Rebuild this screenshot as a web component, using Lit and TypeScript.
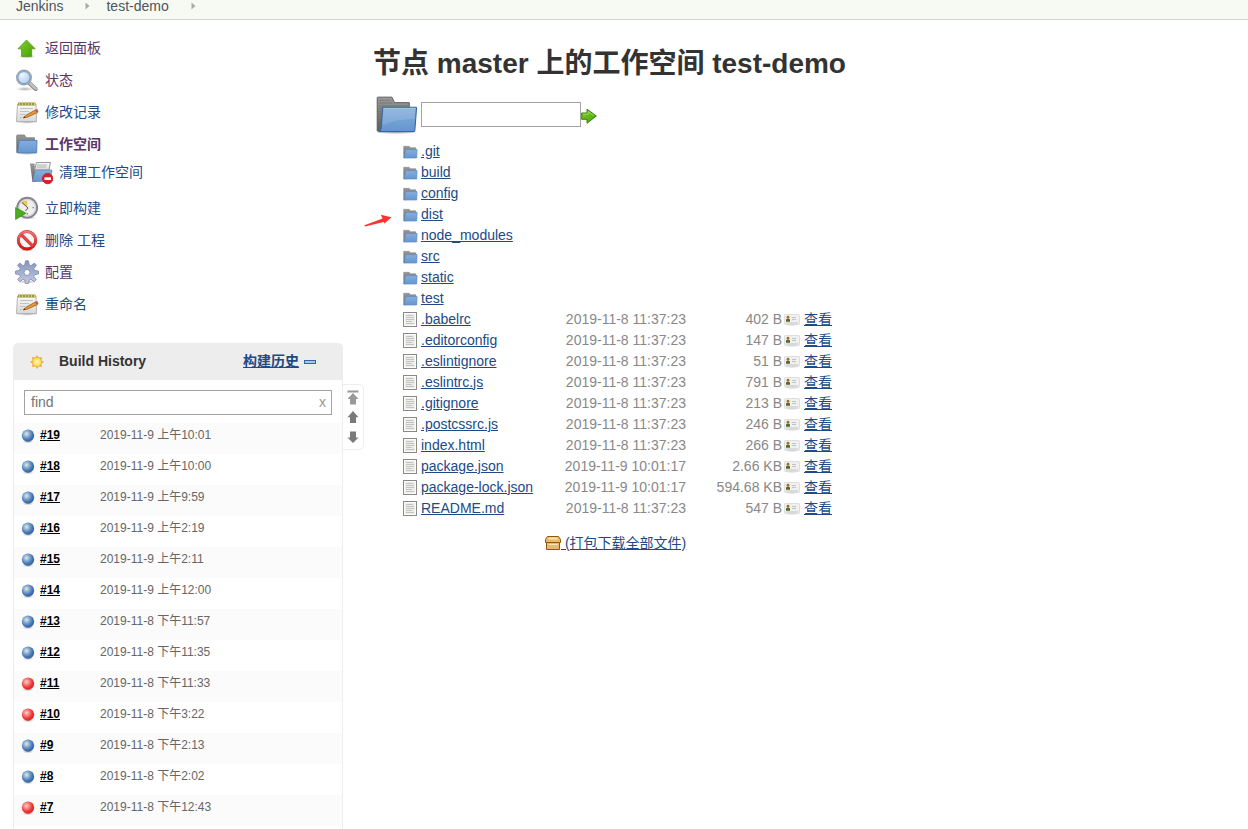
import { LitElement, html, css, svg } from "lit";
import { customElement } from "lit/decorators.js";
import { classMap } from "lit/directives/class-map.js";

const defs = svg`<defs>
  <linearGradient id="blue" x1="0" y1="0" x2="0" y2="1"><stop offset="0" stop-color="#86aede"/><stop offset="1" stop-color="#6496ce"/></linearGradient>
  <linearGradient id="grey" x1="0" y1="0" x2="0" y2="1"><stop offset="0" stop-color="#999"/><stop offset="1" stop-color="#5d605d"/></linearGradient>
  <linearGradient id="green" x1="0" y1="0" x2="1" y2="1"><stop offset="0" stop-color="#7fd028"/><stop offset="1" stop-color="#46a00a"/></linearGradient>
  <linearGradient id="steel" x1="0" y1="0" x2="0" y2="1"><stop offset="0" stop-color="#8494bd"/><stop offset="1" stop-color="#c3cce2"/></linearGradient>
  <linearGradient id="paper" x1="0" y1="0" x2="0" y2="1"><stop offset="0" stop-color="#fafafa"/><stop offset="1" stop-color="#d8d8d6"/></linearGradient>
  <linearGradient id="redgrad" x1="0" y1="0" x2="0" y2="1"><stop offset="0" stop-color="#ee7777"/><stop offset="1" stop-color="#d41414"/></linearGradient>
  <radialGradient id="glass" cx=".35" cy=".3" r=".8"><stop offset="0" stop-color="#f1f7fd"/><stop offset="1" stop-color="#a3c5ea"/></radialGradient>
  <radialGradient id="ballBlue" cx=".38" cy=".36" r=".62"><stop offset="0" stop-color="#e4ecdc"/><stop offset=".4" stop-color="#86abd2"/><stop offset=".75" stop-color="#4878b8"/><stop offset="1" stop-color="#3a639c"/></radialGradient>
  <radialGradient id="ballRed" cx=".38" cy=".36" r=".62"><stop offset="0" stop-color="#ffd2cc"/><stop offset=".4" stop-color="#f77c78"/><stop offset=".75" stop-color="#ef3434"/><stop offset="1" stop-color="#d82a2a"/></radialGradient>
  <radialGradient id="sun"><stop offset="0" stop-color="#fffbd0"/><stop offset="1" stop-color="#fbd53c"/></radialGradient>
  <radialGradient id="shade"><stop offset="0" stop-color="#000" stop-opacity=".3"/><stop offset="1" stop-color="#000" stop-opacity="0"/></radialGradient>
</defs>`;

const pictures: Record<string, [string, unknown]> = {
  up: ["0 0 24 24", svg`<ellipse cx="12" cy="20.3" rx="9" ry="2.600" fill="url(#shade)"/><path d="M11.500 4 20.200 12.800H16.600V20.400H6.600V12.800H3Z" fill="url(#green)" stroke="#4c9a1c" stroke-width=".8" stroke-linejoin="round"/>`],
  search: ["0 0 24 24", svg`<ellipse cx="10" cy="21" rx="9" ry="2.200" fill="url(#shade)"/><path d="M14.500 15.200 20.600 21" stroke="#8a8a8a" stroke-width="4" stroke-linecap="round"/><path d="M14.500 14.900 20.600 20.800" stroke="#c6c6c6" stroke-width="2.200" stroke-linecap="round"/><circle cx="9" cy="9.600" r="7.200" fill="url(#glass)" stroke="#a0a3a8" stroke-width="1.600"/><circle cx="9" cy="9.600" r="6" fill="none" stroke="#6f9fd6" stroke-width="1"/>`],
  note: ["0 0 24 24", svg`<ellipse cx="12" cy="22" rx="11" ry="1.800" fill="url(#shade)"/><path d="M2.500 4H21L21.500 21.600H1.500Z" fill="url(#paper)" stroke="#a4a4a2" stroke-width=".8"/><path d="M3 2.500H20.500V5.500H3Z" fill="#9b9440"/><path d="M4.500 1.900V5M7.500 1.900V5M10.500 1.900V5M13.500 1.900V5M16.500 1.900V5M19.500 1.900V5" stroke="#d5cf72" stroke-width="1"/><path d="M5 8.500H18M5 11.500H14M5 14.500H10M5 17.500H7" stroke="#c2c2c0" stroke-width="1"/><path d="M8.500 17.800 10.600 15.400 20.800 9.800 22.500 12.400 12.500 17.200Z" fill="#e69a3a" stroke="#9a5c17" stroke-width=".8"/><path d="M20.200 10.100 22.200 9.100 23.500 11.400 21.900 12.700Z" fill="#d94a3f"/><path d="M8 18.200 10.200 17.500 9.300 16.400Z" fill="#222"/>`],
  folder: ["0 0 24 24", svg`<ellipse cx="12" cy="21.500" rx="11" ry="1.500" fill="url(#shade)"/><path d="M1.700 20.500V4Q1.700 3 2.700 3H9.500L11 5.800H19.500V18Z" fill="url(#grey)" stroke="#7b7b79" stroke-width=".8"/><path d="M4.300 8.400H22L21.600 20.900H2.500Z" fill="url(#blue)" stroke="#4e80bb" stroke-width=".9"/>`],
  clear: ["0 0 24 24", svg`<path d="M1 2.500 5.500 2.500 7 21H3.500Z" fill="url(#grey)"/><path d="M7.500 1.500H21.500L20 9H5.500Z" fill="url(#paper)" stroke="#999"/><path d="M8 4H18M8 6H17" stroke="#b6b6b6"/><path d="M6.500 9H23L21.500 20.500H3.500Z" fill="url(#blue)" stroke="#648dbe" stroke-width=".7"/><circle cx="18.700" cy="17.600" r="5.200" fill="#dc2028" stroke="#c0141c" stroke-width=".8"/><path d="M15.500 16.300H22V19H15.500Z" fill="#fff"/>`],
  clock: ["0 0 24 24", svg`<ellipse cx="13" cy="22" rx="9" ry="1.500" fill="url(#shade)"/><circle cx="12.200" cy="11.700" r="9.900" fill="#eeeeec" stroke="#858294" stroke-width="1.900"/><circle cx="12.200" cy="11.700" r="8.300" fill="none" stroke="#c8c6d2" stroke-width=".8"/><path d="M12.200 11 6 6.500 8.500 5 12.500 4.500Z" fill="#e5cb58"/><path d="M7 6.500 13 12 10.500 15M18.800 11.700H17.500M12.200 18.500V17" stroke="#555" stroke-width="1" fill="none"/><path d="M.6 11.500 11 17.200 .6 23.600Z" fill="#4bae1c" stroke="#358b0e" stroke-width=".7"/>`],
  ban: ["0 0 24 24", svg`<ellipse cx="12" cy="22" rx="9" ry="1.500" fill="url(#shade)"/><circle cx="12" cy="12.300" r="8.700" fill="#f7f4f4" stroke="#c6272a" stroke-width="3"/><path d="M6 6.300 18 18.300" stroke="#c6272a" stroke-width="3.200"/><circle cx="12" cy="12.300" r="8.700" fill="none" stroke="url(#redgrad)" stroke-width="2.400"/><path d="M6 6.300 18 18.300" stroke="#e0484b" stroke-width="2.500"/>`],
  gear: ["0 0 24 24", svg`<ellipse cx="12" cy="22" rx="9" ry="1.800" fill="url(#shade)"/><path d="M10.600 .8H13.400L14.300 5 15.900 5.700 19.300 3.100 21.400 5.200 18.900 8.600 19.500 10.400 23.500 11.100V14L19.500 14.600 18.800 16.400 21.400 19.700 19.200 21.800 15.900 19.400 14.300 20 13.400 23.500H10.600L9.700 20 8.100 19.400 4.800 21.800 2.600 19.700 5.200 16.400 4.500 14.600.5 14V11.100L4.500 10.400 5.100 8.600 2.600 5.200 4.700 3.100 8.100 5.700 9.700 5Z" fill="url(#steel)" stroke="#7c87ab" stroke-width=".8" stroke-linejoin="round"/><circle cx="12" cy="12.500" r="3" fill="#fff" stroke="#8994b6"/>`],
  bigFolder: ["0 0 48 48", svg`<ellipse cx="24" cy="42.500" rx="23" ry="3" fill="url(#shade)"/><path d="M3.500 41.500V5.500Q3.500 4.500 4.500 4.500H19.500L22.500 10.500H38.500V38Z" fill="url(#grey)" stroke="#555753"/><path d="M5 8H18M5 11H20M5 14H37M5 17H9M5 20H8M5 23H8M5 26H8M5 29H7M5 32H7" stroke="#555" stroke-opacity=".35"/><path d="M9.500 15.500H45.800Q46.500 15.500 46.400 16.500L44.500 41Q44.300 42.100 43.200 42.100H4.800Q7.400 41.500 7.600 39.500Z" fill="url(#blue)" stroke="#3465a4" stroke-width="1.200"/><path d="M10.500 16.700H45.100L44.300 28Q25 28 9.200 35Z" fill="#fff" opacity=".13"/><path d="M10.300 16.800H45.100" stroke="#a8c6e8"/>`],
  smallFolder: ["0 0 16 16", svg`<path d="M1.700 14V2.300H7.200L8.200 3.800H13.800V12Z" fill="url(#grey)" stroke="#868686" stroke-width=".6"/><path d="M3.500 5.600H15.100L14.700 14H2.100Z" fill="url(#blue)" stroke="#5e8cc2" stroke-width=".7"/>`],
  doc: ["0 0 16 16", svg`<rect x="1.500" y=".5" width="13" height="14" fill="#fcfcfa" stroke="#888a85"/><rect x="3" y="2" width="10" height="11" fill="#ededeb"/><path d="M4 3.500H11M4 5.500H12M4 7.500H12M4 9.500H10M4 11.500H12" stroke="#c3c4c1"/>`],
  card: ["0 0 16 16", svg`<ellipse cx="8" cy="13.800" rx="7" ry="1.500" fill="url(#shade)" opacity=".6"/><rect x=".5" y="3.500" width="15" height="10" rx="1" fill="#f0f0f0" stroke="#d3d3d3" stroke-width=".7"/><circle cx="4" cy="6.200" r="1.400" fill="#a8672d"/><path d="M2 10.800V8.600Q4 6.600 6 8.600V10.800Z" fill="#536c20"/><path d="M8 6.500H12M8 8.500H12M2 12H14" stroke="#c2c2c2"/>`],
  go: ["0 0 16 16", svg`<path d="M.7 5H6V1.200L15.300 8 6 15.200V11.300H.7Z" fill="url(#green)" stroke="#3b7d0b"/><path d="M1.900 6.200H7.200V3.500L13 8" fill="none" stroke="#a7e36a" stroke-width=".8"/>`],
  box: ["0 0 16 16", svg`<path d="M2.500 1.500H13.500L15.500 4.500V7.500H14.500V14.500H1.500V7.500H.5V4.500Z" fill="#e9b96e" stroke="#8f5902"/><path d="M3.500 3.500H12.500" stroke="#fbe4b4" stroke-width="2"/><path d="M1.500 7.500H14.500" stroke="#8f5902"/><path d="M3.500 9.500H12.500" stroke="#fae5bd" stroke-width="1"/>`],
  sunny: ["0 0 16 16", svg`<path d="M8 .8 9.400 3.800 13 2.900 12.200 6.500 15.200 8 12.200 9.500 13 13.100 9.400 12.200 8 15.200 6.600 12.200 3 13.100 3.800 9.500.8 8 3.800 6.500 3 2.900 6.600 3.800Z" fill="#f6a53a"/><circle cx="8" cy="8" r="4.700" fill="url(#sun)" stroke="#f1a62e" stroke-width=".6"/>`],
  blue: ["0 0 16 16", svg`<ellipse cx="8" cy="13.500" rx="6" ry="1.800" fill="url(#shade)"/><circle cx="8" cy="7.600" r="6.200" fill="url(#ballBlue)"/>`],
  red: ["0 0 16 16", svg`<ellipse cx="8" cy="13.500" rx="6" ry="1.800" fill="url(#shade)"/><circle cx="8" cy="7.600" r="6.200" fill="url(#ballRed)"/>`],
  navTop: ["0 0 12 16", svg`<path d="M.5 .5H11.500V2.500H.5ZM6 3 11.500 9H9V14.500H3V9H.5Z" fill="#999"/>`],
  navUp: ["0 0 12 16", svg`<path d="M6 1 11.500 7.200H9V13H3V7.200H.5Z" fill="#7a7a7a"/>`],
  navDown: ["0 0 12 16", svg`<path d="M6 13 11.500 7.500H9V1.500H3V7.500H.5Z" fill="#7a7a7a"/>`],
  crumb: ["0 0 5 8", svg`<path d="M.5 .5 4.500 4 .5 7.500Z" fill="#aaa"/>`],
  pointer: ["0 0 28 13", svg`<path d="M.5 11.300 18.500 4.600 16.800 .8 27.500 3.300 20.500 9.400 19.700 7.900 1 12.500Z" fill="#fb3530"/>`],
};

const icon = (name: string, w = 16, h = w) =>
  html`<svg class="icon" width=${w} height=${h} viewBox=${pictures[name][0]}>${defs}${pictures[name][1]}</svg>`;

const tasks = [
  { icon: "up", text: "返回面板", visited: true },
  { icon: "search", text: "状态", visited: true },
  { icon: "note", text: "修改记录" },
  { icon: "folder", text: "工作空间", visited: true, current: true },
  { icon: "clear", text: "清理工作空间", sub: true },
  { icon: "clock", text: "立即构建" },
  { icon: "ban", text: "删除 工程" },
  { icon: "gear", text: "配置", visited: true },
  { icon: "note", text: "重命名" },
];

const builds: [number, string, string][] = [
  [19, "2019-11-9 上午10:01", "blue"],
  [18, "2019-11-9 上午10:00", "blue"],
  [17, "2019-11-9 上午9:59", "blue"],
  [16, "2019-11-9 上午2:19", "blue"],
  [15, "2019-11-9 上午2:11", "blue"],
  [14, "2019-11-9 上午12:00", "blue"],
  [13, "2019-11-8 下午11:57", "blue"],
  [12, "2019-11-8 下午11:35", "blue"],
  [11, "2019-11-8 下午11:33", "red"],
  [10, "2019-11-8 下午3:22", "red"],
  [9, "2019-11-8 下午2:13", "blue"],
  [8, "2019-11-8 下午2:02", "blue"],
  [7, "2019-11-8 下午12:43", "red"],
];

const folders = [".git", "build", "config", "dist", "node_modules", "src", "static", "test"];

const files = [
  [".babelrc", "2019-11-8 11:37:23", "402 B"],
  [".editorconfig", "2019-11-8 11:37:23", "147 B"],
  [".eslintignore", "2019-11-8 11:37:23", "51 B"],
  [".eslintrc.js", "2019-11-8 11:37:23", "791 B"],
  [".gitignore", "2019-11-8 11:37:23", "213 B"],
  [".postcssrc.js", "2019-11-8 11:37:23", "246 B"],
  ["index.html", "2019-11-8 11:37:23", "266 B"],
  ["package.json", "2019-11-9 10:01:17", "2.66 KB"],
  ["package-lock.json", "2019-11-9 10:01:17", "594.68 KB"],
  ["README.md", "2019-11-8 11:37:23", "547 B"],
];

@customElement("app-root")
export class AppRoot extends LitElement {
  static styles = css`
    :host {
      display: block;
      height: 829px;
      overflow: hidden;
      background: #fff;
      color: #333;
      font: 14px/20px "Liberation Sans", "Noto Sans CJK SC", sans-serif;
    }
    * { box-sizing: border-box; }
    .icon { display: block; flex: none; }
    .link { color: #204a87; text-decoration: underline; white-space: nowrap; }
    .crumbs {
      display: flex;
      align-items: center;
      height: 20px;
      padding: 0 0 7px 16px;
      background: #f6faf2;
      border-bottom: 1px solid #d3d7cf;
      color: #4d545d;
      line-height: 12px;
    }
    .crumbs .icon { margin: 0 16px 0 22px; }
    .page { display: flex; align-items: flex-start; }
    .side { width: 343px; padding: 12px 0 0 13px; flex: none; }
    .tasks { height: 311px; }
    .task { display: flex; align-items: center; height: 32px; padding-left: 2px; gap: 6px; color: #204a87; }
    .task.sub { padding: 0 0 8px 16px; }
    .task.visited { color: #5c3566; }
    .task.current { font-weight: bold; }
    .task.sub .icon { margin-top: 2px; }
    .history { height: 500px; border: 1px solid #ededed; border-width: 0 1px; border-radius: 5px 5px 0 0; }
    .head {
      display: flex;
      align-items: center;
      height: 37px;
      margin: 0 -1px;
      padding: 0 27px 1px 16px;
      background: #ededed;
      border-radius: 5px 5px 0 0;
      font-weight: bold;
    }
    .head .icon { margin-top: 2px; }
    .title { flex: 1; margin-left: 14px; }
    .minus { width: 12px; height: 4px; margin: 1px 0 0 5px; border: 1px solid #3465a4; background: #a9c6e8; }
    .find {
      display: flex;
      justify-content: space-between;
      align-items: center;
      height: 25px;
      margin: 10px 10px 8px;
      padding: 0 5px 1px 6px;
      border: 1px solid #a3a3a3;
      color: #757575;
    }
    .clear { color: #999; }
    .build { display: flex; align-items: flex-start; height: 31px; padding: 5px 0 0 6px; font-size: 12px; line-height: 14px; }
    .build:nth-child(odd) { background: #fbfbfb; }
    .number { width: 60px; height: 14px; margin-left: 4px; color: #000; font-weight: bold; text-decoration: underline; }
    .when { height: 14px; color: #666; }
    .pager {
      display: flex;
      flex-direction: column;
      align-items: center;
      gap: 4px;
      width: 21px;
      height: 66px;
      margin-top: 364px;
      padding-top: 5px;
      border: 1px solid #ededed;
      border-left: 0;
      border-radius: 0 5px 5px 0;
      flex: none;
    }
    .main { width: 500px; padding: 24px 0 0 9px; }
    h1 { margin: 0; height: 40px; font-size: 28px; line-height: 40px; white-space: nowrap; }
    .path { display: flex; height: 56px; padding-top: 8px; }
    .path > .icon:first-child { margin: 1px 0 0 1px; }
    .path > .icon:last-child { margin-top: 16px; }
    .entry { width: 160px; height: 25px; margin: 10px 0 0 3px; border: 1px solid #a3a3a3; }
    .row { display: grid; grid-template-columns: 19px 145px 120px 96px 22px 28px; align-items: center; height: 21px; margin-left: 29px; white-space: nowrap; }
    .row > .icon { margin-top: 3px; }
    .row .card { padding: 1px 0 0 2px; }
    .row .meta { color: #888; display: flex; justify-content: flex-end; }
    .all { display: flex; align-items: center; height: 20px; margin: 15px 0 0 172px; }
    .mark { position: absolute; left: 364px; top: 214px; }
  `;

  render() {
    return html`
      <nav class="crumbs"><span>Jenkins</span>${icon("crumb", 5, 8)}<span>test-demo</span>${icon("crumb", 5, 8)}</nav>
      <div class="page">
        <aside class="side">
          <div class="tasks">
            ${tasks.map((t) => html`<div class=${classMap({ task: true, sub: !!t.sub, visited: !!t.visited, current: !!t.current })}>${icon(t.icon, 24)}<span>${t.text}</span></div>`)}
          </div>
          <section class="history">
            <header class="head">${icon("sunny", 16)}<span class="title">Build History</span><span class="link">构建历史</span><i class="minus"></i></header>
            <div class="find"><span>find</span><span class="clear">x</span></div>
            <div>
              ${builds.map(([n, when, ball]) => html`<div class="build">${icon(ball, 16)}<span class="number">#${n}</span><span class="when">${when}</span></div>`)}
            </div>
          </section>
        </aside>
        <div class="pager">${icon("navTop", 12, 16)}${icon("navUp", 12, 16)}${icon("navDown", 12, 16)}</div>
        <main class="main">
          <h1>节点 master 上的工作空间 test-demo</h1>
          <div class="path">${icon("bigFolder", 44)}<div class="entry"></div>${icon("go", 16)}</div>
          ${folders.map((f) => html`<div class="row">${icon("smallFolder")}<span class="link">${f}</span></div>`)}
          ${files.map(([name, date, size]) => html`<div class="row">${icon("doc")}<span class="link">${name}</span><span class="meta">${date}</span><span class="meta">${size}</span><span class="card">${icon("card")}</span><span class="link">查看</span></div>`)}
          <div class="all">${icon("box")}<span class="link">&nbsp;(打包下载全部文件)</span></div>
        </main>
      </div>
      <div class="mark">${icon("pointer", 28, 13)}</div>
    `;
  }
}
